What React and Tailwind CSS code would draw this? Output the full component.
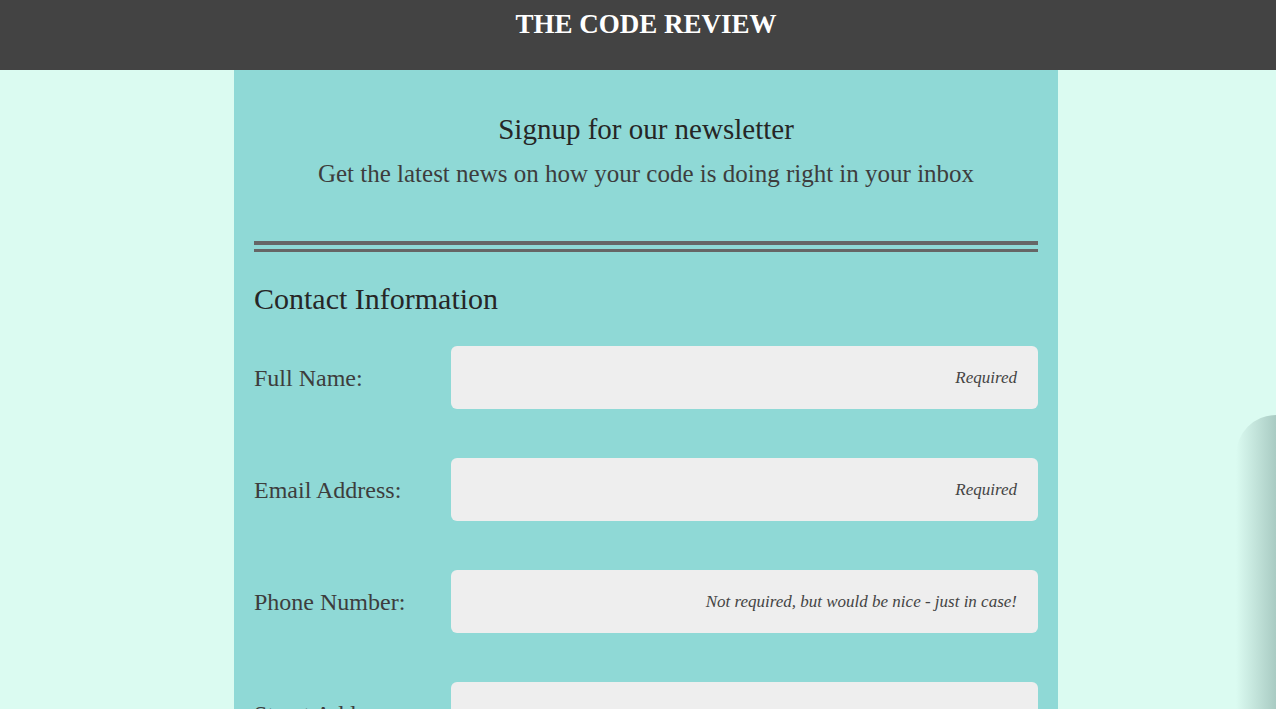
import React from 'react'

const fields = [
  { label: 'Full Name:', hint: 'Required' },
  { label: 'Email Address:', hint: 'Required' },
  { label: 'Phone Number:', hint: 'Not required, but would be nice - just in case!' },
  { label: 'Street Address:', hint: '' },
]

export default function App() {
  return (
    <div className="relative h-[709px] bg-[#dbfbf1] overflow-hidden pl-4 font-['Liberation_Serif',serif]">
      {/* Header */}
      <header className="-ml-4 pl-4 h-[70px] bg-[#434343] flex justify-center pt-[7px]">
        <h1 className="text-white text-[27px] font-bold leading-[34px]">THE CODE REVIEW</h1>
      </header>

      <main className="mx-auto w-[824px] bg-[#8fd9d6] px-5 pb-10">
        {/* Intro */}
        <div className="text-center pt-[42px]">
          <h2 className="text-[#262626] text-[29px] leading-[34px]">Signup for our newsletter</h2>
          <p className="text-[#3d3d3d] text-[25px] leading-[30px] mt-[13px]">
            Get the latest news on how your code is doing right in your inbox
          </p>
        </div>

        <div className="mt-[52px]">
          <div className="h-[4px] bg-[#666666]" />
          <div className="h-[3px] bg-[#666666] mt-[4px]" />
        </div>

        <h3 className="text-[#262626] text-[30px] leading-[34px] mt-[30px]">Contact Information</h3>

        <div className="mt-[30px] flex flex-col gap-[49px]">
          {fields.map((f) => (
            <div key={f.label} className="flex items-center">
              <label className="w-[197px] text-[#3d3d3d] text-[24px] whitespace-nowrap">{f.label}</label>
              <div className="flex-1 h-[63px] rounded-[6px] bg-[#eeeeee] flex items-center justify-end pr-[21px]">
                <span className="italic text-[#444] text-[17px]">{f.hint}</span>
              </div>
            </div>
          ))}
        </div>
      </main>

      {/* edge shadow of an overlapping panel */}
      <div className="absolute right-0 top-[415px] w-[40px] h-[340px] bg-gradient-to-r from-transparent to-[#a9cbc3] rounded-tl-[40px] pointer-events-none" />
    </div>
  )
}
